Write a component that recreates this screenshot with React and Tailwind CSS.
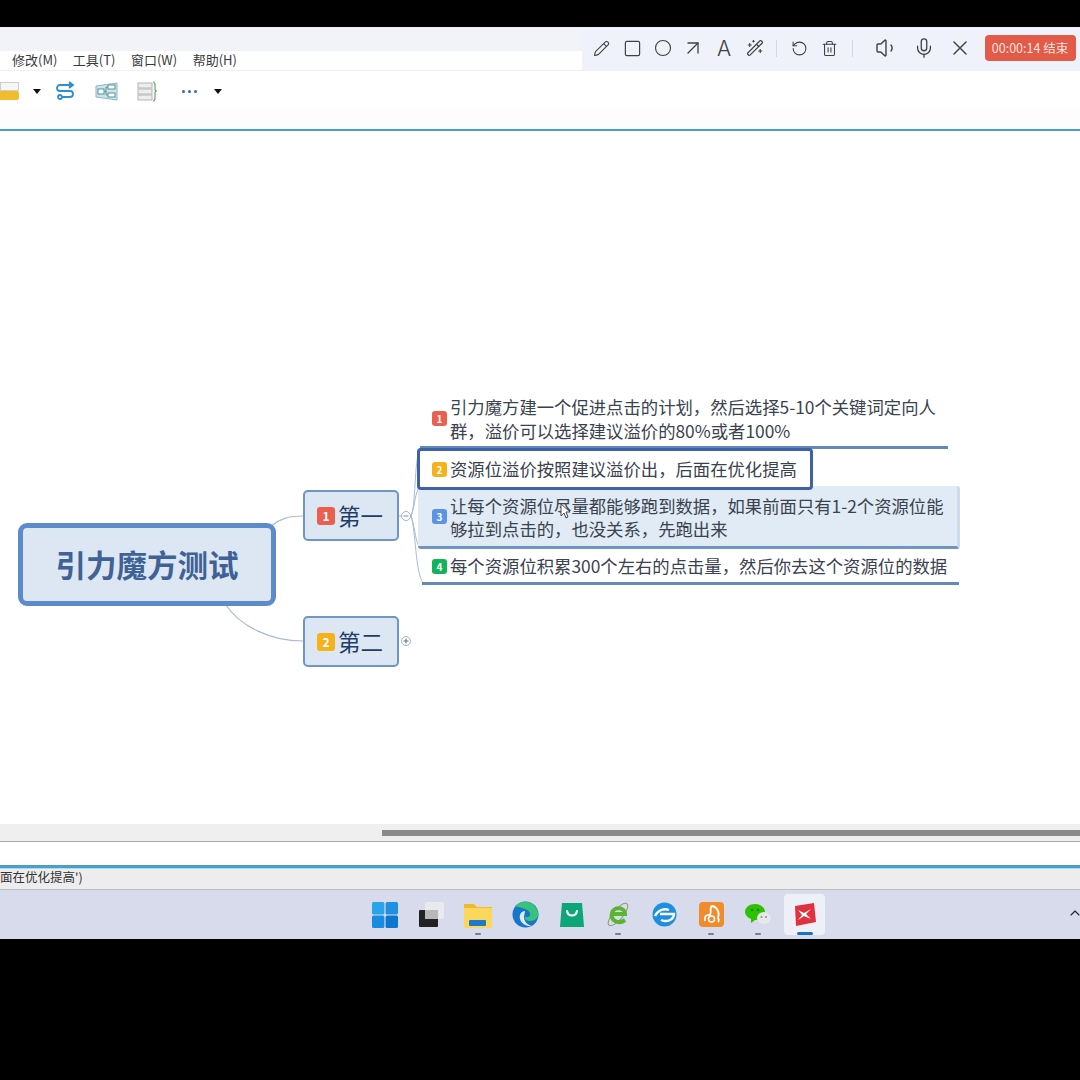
import React from 'react'
import { Pencil, Square, Circle, ArrowUpRight, Wand2, RotateCcw, Trash2, Volume1, Mic, X, ChevronUp } from 'lucide-react'

const font = { fontFamily: '"Noto Sans CJK SC", "Noto Sans", sans-serif' }

const Badge = ({ n, color, size = 'sm' }) => (
	<span
		className={`${color} flex shrink-0 items-center justify-center font-bold text-white ${
			size === 'lg' ? 'h-[18px] w-[18px] rounded-[3px] text-[12px]' : 'h-[15px] w-[15px] rounded-[3px] text-[10px]'
		}`}>
		{n}
	</span>
)

const Caret = ({ className }) => <span className={`${className} block h-0 w-0 border-x-[4px] border-t-[5px] border-x-transparent border-t-[#111]`} />

const WindowsLogo = () => (
	<svg width="26" height="26" viewBox="0 0 26 26">
		<rect x="0" y="0" width="12.4" height="12.4" rx="1.5" fill="#29a3ea" />
		<rect x="13.6" y="0" width="12.4" height="12.4" rx="1.5" fill="#1f8fe0" />
		<rect x="0" y="13.6" width="12.4" height="12.4" rx="1.5" fill="#1a8ce0" />
		<rect x="13.6" y="13.6" width="12.4" height="12.4" rx="1.5" fill="#0f76cf" />
	</svg>
)

const TaskView = () => (
	<svg width="26" height="26" viewBox="0 0 26 26">
		<rect x="6" y="0" width="19" height="17" rx="2" fill="#e9e9ee" />
		<rect x="0" y="8" width="19" height="17" rx="1" fill="#222" />
		<rect x="6" y="8" width="13" height="9" fill="#b8b8b8" />
	</svg>
)

const Folder = () => (
	<svg width="28" height="26" viewBox="0 0 28 26">
		<path d="M0 2h10l3 3h15v21H0z" fill="#f1b92e" />
		<rect x="0" y="6" width="28" height="20" fill="#fbd75c" />
		<rect x="5" y="18" width="17" height="6" rx="1" fill="#1f78c8" />
	</svg>
)

const Edge = () => (
	<svg width="27" height="27" viewBox="0 0 27 27">
		<circle cx="13.5" cy="13.5" r="13" fill="#1677c9" />
		<path d="M3 5C9-2 23-1 26 11c1 6-3 9-8 9-3 0-6-2-5-4 3 0 6 0 5-4-2-5-10-5-15-7z" fill="#39c27a" />
		<path d="M13 10c-4 0-6 4-5 8s6 8 12 7c-5-1-8-5-8-9 0-2 1-4 1-6z" fill="#fff" fillOpacity="0.85" />
	</svg>
)

const Store = () => (
	<svg width="24" height="26" viewBox="0 0 24 26">
		<path d="M2 1h20l2 24H0z" fill="#0ca678" />
		<path d="M7 9c1 6 9 6 10 0" fill="none" stroke="#fff" strokeWidth="2" strokeLinecap="round" />
	</svg>
)

const IeGreen = () => (
	<svg width="24" height="27" viewBox="0 0 24 27">
		<ellipse cx="12" cy="13.5" rx="14" ry="5" transform="rotate(-50 12 13.5)" fill="none" stroke="#8a9a70" strokeWidth="1" />
		<path d="M6 13h13c0-7-11-8-13-1-2 7 6 12 13 7" fill="none" stroke="#5bb531" strokeWidth="4" />
	</svg>
)

const EdgeOld = () => (
	<svg width="25" height="25" viewBox="0 0 25 25">
		<circle cx="12.5" cy="12.5" r="12" fill="#1d8fe1" />
		<path d="M3 14C6 8 12 6 17 8M8 12h14c0 5-6 9-13 6" fill="none" stroke="#fff" strokeWidth="2.4" />
	</svg>
)

const UcBrowser = () => (
	<svg width="25" height="25" viewBox="0 0 25 25">
		<rect x="0" y="0" width="25" height="25" rx="4" fill="#f28b2c" />
		<path d="M6 19c-1-4 1-7 5-6 2-3-1-7 2-9 5 1 8 6 6 12 1 1 1 3 0 4" fill="none" stroke="#fff" strokeWidth="1.800" />
		<circle cx="12.500" cy="17" r="3" fill="none" stroke="#fff" strokeWidth="1.500" />
	</svg>
)

const WeChat = () => (
	<svg width="26" height="24" viewBox="0 0 26 24">
		<path d="M10 1c5.500 0 10 3.500 10 8s-4.500 8-10 8l-4 3v-4C2.500 14.500 0 12 0 9c0-4.500 4.500-8 10-8z" fill="#2dc100" />
		<ellipse cx="19" cy="15" rx="7" ry="6" fill="#e8e8ea" />
		<circle cx="16.500" cy="14" r="1" fill="#888" />
		<circle cx="21" cy="14" r="1" fill="#888" />
		<circle cx="7" cy="7" r="1.300" fill="#17860a" />
		<circle cx="13" cy="7" r="1.300" fill="#17860a" />
	</svg>
)

const Xmind = () => (
	<svg width="23" height="23" viewBox="0 0 23 23">
		<path d="M2 3l19-3 2 19-20 4z" fill="#e0323e" />
		<path d="M5 7l6 3 7-4-5 5 5 5-7-3-6 4 4-5z" fill="#fff" />
	</svg>
)

const taskIcons = [
	{ icon: <WindowsLogo /> },
	{ icon: <TaskView /> },
	{ icon: <Folder />, open: true },
	{ icon: <Edge /> },
	{ icon: <Store /> },
	{ icon: <IeGreen />, open: true },
	{ icon: <EdgeOld /> },
	{ icon: <UcBrowser />, open: true },
	{ icon: <WeChat />, open: true },
	{ icon: <Xmind />, active: true },
]

const RecorderBar = () => (
	<div className="absolute right-0 top-[27px] flex h-[44px] w-[498px] items-center bg-[#eff2fb] pb-[2px] text-[#404040]">
		<div className="ml-[4px] flex w-[184px] items-center">
			<span className="flex w-[30.700px] justify-center"><Pencil size={17} strokeWidth={1.5} /></span>
			<span className="flex w-[30.700px] justify-center"><Square size={19} strokeWidth={1.5} /></span>
			<span className="flex w-[30.700px] justify-center"><Circle size={18} strokeWidth={1.5} /></span>
			<span className="flex w-[30.700px] justify-center"><ArrowUpRight size={24} strokeWidth={1.3} /></span>
			<span className="flex w-[30.700px] justify-center text-[21px] font-light leading-none" style={{ fontFamily: 'Inter, sans-serif' }}>A</span>
			<span className="flex w-[30.700px] justify-center"><Wand2 size={18} strokeWidth={1.5} /></span>
		</div>
		<span className="ml-[6px] h-[17px] w-px bg-[#d5d8e0]" />
		<div className="ml-[7px] flex items-center">
			<span className="flex w-[30px] justify-center"><RotateCcw size={17} strokeWidth={1.5} /></span>
			<span className="flex w-[30px] justify-center"><Trash2 size={17} strokeWidth={1.5} /></span>
		</div>
		<span className="ml-[8px] h-[17px] w-px bg-[#d5d8e0]" />
		<div className="ml-[16px] flex items-center">
			<span className="flex w-[36.500px] justify-center"><Volume1 size={24} strokeWidth={1.4} /></span>
			<span className="flex w-[36.500px] justify-center"><Mic size={22} strokeWidth={1.4} /></span>
			<span className="flex w-[36.500px] justify-center"><X size={24} strokeWidth={1.4} /></span>
		</div>
		<div className="ml-[6px] flex h-[26px] w-[91px] items-center justify-center rounded-[4px] bg-[#e25a48] text-[12.500px] text-[#f9e3dd]">
			00:00:14 结束
		</div>
	</div>
)

const Connectors = () => (
	<svg className="absolute left-0 top-0" width="1080" height="693" viewBox="0 0 1080 693" fill="none">
		<path d="M271 395C280 388 288 385 303 385" stroke="#a9bccf" strokeWidth="1.200" />
		<path d="M226 474C240 495 270 510 303 510" stroke="#a9bccf" strokeWidth="1.200" />
		<path d="M399 385H412" stroke="#a9bccf" strokeWidth="1" />
		<path d="M411 385C416 375 414 330 420 317" stroke="#a9bccf" strokeWidth="1" />
		<path d="M411 385C414 378 415 365 418 358" stroke="#a9bccf" strokeWidth="1" />
		<path d="M411 385C414 392 415 408 419 416" stroke="#a9bccf" strokeWidth="1" />
		<path d="M411 385C416 400 415 440 423 452" stroke="#a9bccf" strokeWidth="1" />
		<circle cx="406" cy="385" r="4.500" fill="#fff" stroke="#9fb2c4" />
		<path d="M403.500 385h5" stroke="#7d8b99" />
		<circle cx="406" cy="510" r="4.500" fill="#fff" stroke="#9fb2c4" />
		<path d="M403.500 510h5M406 507.500v5" stroke="#5e6b78" />
	</svg>
)

const MindMap = () => (
	<div className="relative flex-1 bg-white">
		<Connectors />

		<div className="absolute left-[18px] top-[392px] flex h-[83px] w-[258px] items-center justify-center rounded-[9px] border-[5px] border-[#5b8bca] bg-[#dde6f3] text-[30.500px] font-bold text-[#3f6296]">
			引力魔方测试
		</div>

		<div className="absolute left-[303px] top-[359px] flex h-[51px] w-[96px] items-center justify-center gap-[3px] rounded-[5px] border-2 border-[#6e95c6] bg-[#dde6f3] pr-[2px] text-[22.500px] text-[#1f3d66]">
			<Badge n="1" color="bg-[#ec5f4f]" size="lg" />
			第一
		</div>
		<div className="absolute left-[303px] top-[485px] flex h-[51px] w-[96px] items-center justify-center gap-[3px] rounded-[5px] border-2 border-[#6e95c6] bg-[#dde6f3] pr-[2px] text-[22.500px] text-[#1f3d66]">
			<Badge n="2" color="bg-[#f6b21b]" size="lg" />
			第二
		</div>

		<div className="absolute left-[420px] top-[258px] flex h-[60px] w-[528px] items-center gap-[3px] border-b-[3px] border-[#6288bc] pl-[12px] pt-[2px] text-[17.350px] leading-[24px] text-[#3a424e]">
			<Badge n="1" color="bg-[#ec5f4f]" />
			<p>引力魔方建一个促进点击的计划，然后选择5-10个关键词定向人<br />群，溢价可以选择建议溢价的80%或者100%</p>
		</div>

		<div className="absolute left-[418px] top-[355px] flex h-[63px] w-[542px] items-center gap-[3px] rounded-[3px] border-r-[3px] border-b-[3px] border-r-[#ccdaea] border-b-[#6e95c6] bg-[#e0ebf5] pl-[14px] pt-[1px] text-[17.350px] leading-[23px] text-[#3a424e]">
			<Badge n="3" color="bg-[#5b94e6]" />
			<p>让每个资源位尽量都能够跑到数据，如果前面只有1-2个资源位能<br />够拉到点击的，也没关系，先跑出来</p>
		</div>

		<div className="absolute left-[417px] top-[317px] flex h-[42px] w-[396px] items-center gap-[3px] rounded-[4px] border-[3px] border-[#3e62a8] bg-white pl-[12px] text-[17.350px] text-[#3a424e]">
			<Badge n="2" color="bg-[#f6b21b]" />
			<p>资源位溢价按照建议溢价出，后面在优化提高</p>
		</div>

		<div className="absolute left-[422px] top-[420px] flex h-[34px] w-[537px] items-center gap-[3px] border-b-[3px] border-[#6288bc] pl-[10px] text-[17.350px] text-[#3a424e]">
			<Badge n="4" color="bg-[#12b35a]" />
			<p className="whitespace-nowrap">每个资源位积累300个左右的点击量，然后你去这个资源位的数据</p>
		</div>

		<svg className="absolute left-[560px] top-[372px]" width="12" height="17" viewBox="0 0 12 17">
			<path d="M1 1v12l3-3 2 5 2-1-2-5h4z" fill="#fff" stroke="#4a4a4a" strokeWidth="1" />
		</svg>
	</div>
)

const App = () => {
	return (
		<div className="relative flex h-[1080px] w-[1080px] flex-col overflow-hidden bg-black" style={font}>
			<div className="h-[27px] shrink-0 bg-black" />
			<div className="h-[24px] shrink-0 bg-[#f1f3f8]" />

			<div className="flex h-[20px] shrink-0 items-center gap-[15.500px] border-b border-[#f0f0f0] bg-white pb-[1px] pl-[12px] text-[13px] text-[#3a3a3a]">
				<span>修改(M)</span>
				<span>工具(T)</span>
				<span>窗口(W)</span>
				<span>帮助(H)</span>
			</div>

			<div className="flex h-[37px] shrink-0 items-center bg-white pt-[3px]">
				<div className="flex w-[19px] flex-col">
					<span className="h-[9px] border border-[#cfcfcf] bg-[#f6f6f6]" />
					<span className="h-[9px] rounded-r-[2px] bg-[#f2bd2c]" />
				</div>
				<Caret className="ml-[14px]" />
				<svg className="ml-[14px]" width="20" height="20" viewBox="0 0 20 20" fill="none" stroke="#2b8fd6" strokeWidth="1.800">
					<path d="M16 4H5a3 3 0 0 0 0 6h10a3 3 0 0 1 0 6H7" />
					<path d="M14 1l4 3-4 3" fill="#2b8fd6" />
					<circle cx="5" cy="16" r="2" />
				</svg>
				<svg className="ml-[20px]" width="23" height="19" viewBox="0 0 23 19" fill="none">
					<path d="M1 4l21-3v17L1 15z" fill="#cfe3ee" stroke="#8fb7c9" />
					<rect x="3" y="7" width="6" height="5" fill="#fff" stroke="#4c9a8f" />
					<rect x="13" y="3" width="7" height="4" fill="#fff" stroke="#4c9a8f" />
					<rect x="13" y="11" width="7" height="4" fill="#fff" stroke="#4c9a8f" />
					<path d="M9 9.500h2V5h2M11 9.500V13h2" stroke="#4c9a8f" />
				</svg>
				<svg className="ml-[19px]" width="21" height="21" viewBox="0 0 21 21" fill="none">
					<rect x="1" y="2" width="14" height="5" fill="#ededed" stroke="#b5b5b5" />
					<rect x="1" y="8" width="14" height="5" fill="#ededed" stroke="#b5b5b5" />
					<rect x="1" y="14" width="14" height="5" fill="#ededed" stroke="#b5b5b5" />
					<path d="M16 1c2 0 2 1 2 3v4c0 1 1 2 2 2-1 0-2 1-2 2v5c0 2 0 3-2 3" stroke="#6aa56a" strokeWidth="1.200" />
				</svg>
				<div className="ml-[24px] flex gap-[3px]">
					<span className="h-[3px] w-[3px] rounded-full bg-[#3d6a9f]" />
					<span className="h-[3px] w-[3px] rounded-full bg-[#3d6a9f]" />
					<span className="h-[3px] w-[3px] rounded-full bg-[#3d6a9f]" />
				</div>
				<Caret className="ml-[17px]" />
			</div>

			<div className="h-[21px] shrink-0 bg-[#fdfdfd]" />
			<div className="h-[2px] shrink-0 bg-[#4a9ec8]" />

			<MindMap />

			<div className="flex h-[18px] shrink-0 items-center border-b border-[#a8a8a8] bg-[#efefef] pl-[382px]">
				<span className="h-[6px] flex-1 bg-[#8a8a8a]" />
			</div>
			<div className="h-[23px] shrink-0 bg-white" />
			<div className="h-[4px] shrink-0 border-b border-[#a9dcf2] bg-[#4a9ec8]" />
			<div className="flex h-[21px] shrink-0 items-center border-b border-[#bcbcbc] bg-[#ededed] pb-[3px] text-[12.500px] text-[#333]">
				面在优化提高')
			</div>

			<div className="relative flex h-[49px] shrink-0 items-center bg-[#d7dbeb] pl-[362px]">
				{taskIcons.map((item, i) => (
					<div key={i} className="relative flex h-[41px] w-[46.600px] items-center justify-center">
						{item.active ? <span className="absolute inset-y-0 left-[3px] right-[3px] rounded-[4px] bg-[#eef0f7]" /> : null}
						<span className="relative">{item.icon}</span>
						{item.open ? <span className="absolute bottom-0 h-[2px] w-[6px] rounded-full bg-[#7d7d85]" /> : null}
						{item.active ? <span className="absolute bottom-0 h-[3px] w-[16px] rounded-full bg-[#1a6fc0]" /> : null}
					</div>
				))}
				<ChevronUp className="absolute right-[-3px] top-[15px] text-[#222]" size={16} strokeWidth={1.6} />
			</div>

			<div className="h-[141px] shrink-0 bg-black" />

			<RecorderBar />
		</div>
	)
}

export default App
